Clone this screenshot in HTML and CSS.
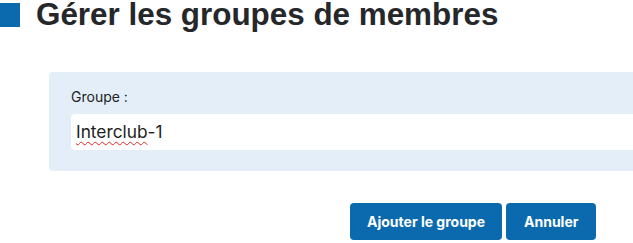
FILE: index.html
```html
<!DOCTYPE html>
<html lang="fr">
<head>
<meta charset="utf-8">
<link rel="stylesheet" href="styles.css">
</head>
<body>
<div class="page">
  <h1 class="title"><span class="mark"></span><span class="title-text">Gérer les groupes de membres</span></h1>
  <div class="panel">
    <label class="label">Groupe :</label>
    <div class="input"><span class="misspelled">Interclub</span>-1</div>
  </div>
  <div class="actions">
    <button class="btn">Ajouter le groupe</button>
    <button class="btn btn-cancel">Annuler</button>
  </div>
</div>
</body>
</html>
```
FILE: styles.css
```css
html, body {
  margin: 0;
  padding: 0;
  background: #ffffff;
  overflow: hidden;
}
.page {
  width: 633px;
  height: 243px;
  font-family: Inter, "Noto Sans", sans-serif;
  color: #222;
}
.title {
  display: flex;
  align-items: center;
  gap: 16px;
  margin: 0;
  height: 30px;
  font-family: "Liberation Sans", Arial, sans-serif;
  font-size: 31.4px;
  font-weight: 700;
  line-height: 30px;
  color: #25272b;
}
.mark {
  display: block;
  flex: none;
  width: 20px;
  height: 24px;
  background: #0b6aad;
}
.title-text {
  white-space: nowrap;
}
.panel {
  margin: 42px 0 0 49px;
  width: 640px;
  height: 99px;
  box-sizing: border-box;
  background: #e3eef8;
  border-radius: 4px 0 0 4px;
  padding: 16px 0 0 22px;
}
.label {
  display: block;
  font-size: 14px;
  line-height: 18px;
  color: #222;
}
.input {
  margin-top: 8px;
  height: 36px;
  background: #fff;
  border-radius: 4px 0 0 4px;
  box-sizing: border-box;
  padding-left: 5px;
  font-size: 17.3px;
  line-height: 36px;
  color: #222;
}
.misspelled {
  text-decoration: underline wavy #e0261f;
  text-decoration-thickness: 1px;
  text-underline-offset: 3px;
}
.actions {
  display: flex;
  gap: 4px;
  margin: 32px 0 0 350px;
}
.btn {
  height: 37px;
  border: none;
  border-radius: 4px;
  background: #0b6aad;
  color: #fff;
  font-family: Inter, "Noto Sans", sans-serif;
  font-size: 14px;
  font-weight: 700;
  padding: 0 17px;
  cursor: pointer;
}
.btn-cancel {
  padding: 0 18px;
}
```
